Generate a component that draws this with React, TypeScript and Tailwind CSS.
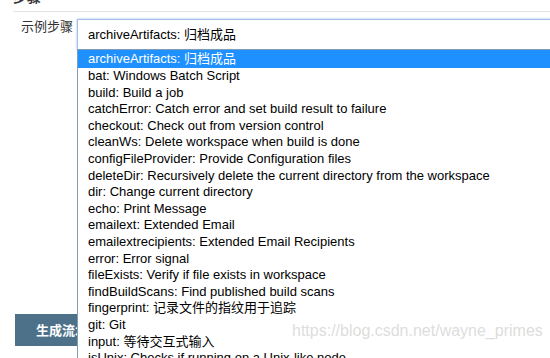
import React from 'react';

const steps = [
  'bat: Windows Batch Script',
  'build: Build a job',
  'catchError: Catch error and set build result to failure',
  'checkout: Check out from version control',
  'cleanWs: Delete workspace when build is done',
  'configFileProvider: Provide Configuration files',
  'deleteDir: Recursively delete the current directory from the workspace',
  'dir: Change current directory',
  'echo: Print Message',
  'emailext: Extended Email',
  'emailextrecipients: Extended Email Recipients',
  'error: Error signal',
  'fileExists: Verify if file exists in workspace',
  'findBuildScans: Find published build scans',
  'fingerprint: 记录文件的指纹用于追踪',
  'git: Git',
  'input: 等待交互式输入',
  'isUnix: Checks if running on a Unix-like node',
];

export default function App() {
  return (
    <div className="relative w-[550px] h-[358px] overflow-hidden bg-white text-[13px] font-['Liberation_Sans','Noto_Sans_CJK_SC',sans-serif]">
      {/* section header, mostly scrolled away */}
      <div className="-mt-[11px] ml-[13px] pb-[6px] border-b border-[#e3e3e3]">
        <h3 className="text-[14px] leading-[16px] font-bold text-[#333]">步骤</h3>
      </div>

      <div className="flex mt-[7px] pl-[21px]">
        <label className="w-[56px] shrink-0 leading-[16px] text-[#333]">示例步骤</label>
        <div className="relative w-[500px] shrink-0 h-[31px] flex items-center pl-[10px] border border-[#a3c0ec] shadow-[0_0_2px_#9bb8e6] text-black leading-[16px]">
          archiveArtifacts: 归档成品
          {/* open dropdown */}
          <div className="absolute top-full -left-px w-[500px] bg-white border border-[#7f9db9] text-black">
            <div className="h-[18px] flex items-center pl-[10px] bg-[#1e90ff] text-white">archiveArtifacts: 归档成品</div>
            {steps.map((s) => (
              <div key={s} className="h-[16.6px] leading-[16.6px] pl-[10px] whitespace-nowrap">
                {s}
              </div>
            ))}
          </div>
        </div>
      </div>

      <div className="mt-[264px] ml-[15px]">
        <button className="h-[32px] pl-[21px] pr-[20px] bg-[#4c7189] text-white font-bold text-[13px] font-['Noto_Sans_CJK_SC',sans-serif]">
          生成流水线脚本
        </button>
      </div>

      <div className="absolute left-[292px] top-[322px] text-[16px] leading-[18px] text-[#d4d4d4]/80 pointer-events-none">
        https://blog.csdn.net/wayne_primes
      </div>
    </div>
  );
}
